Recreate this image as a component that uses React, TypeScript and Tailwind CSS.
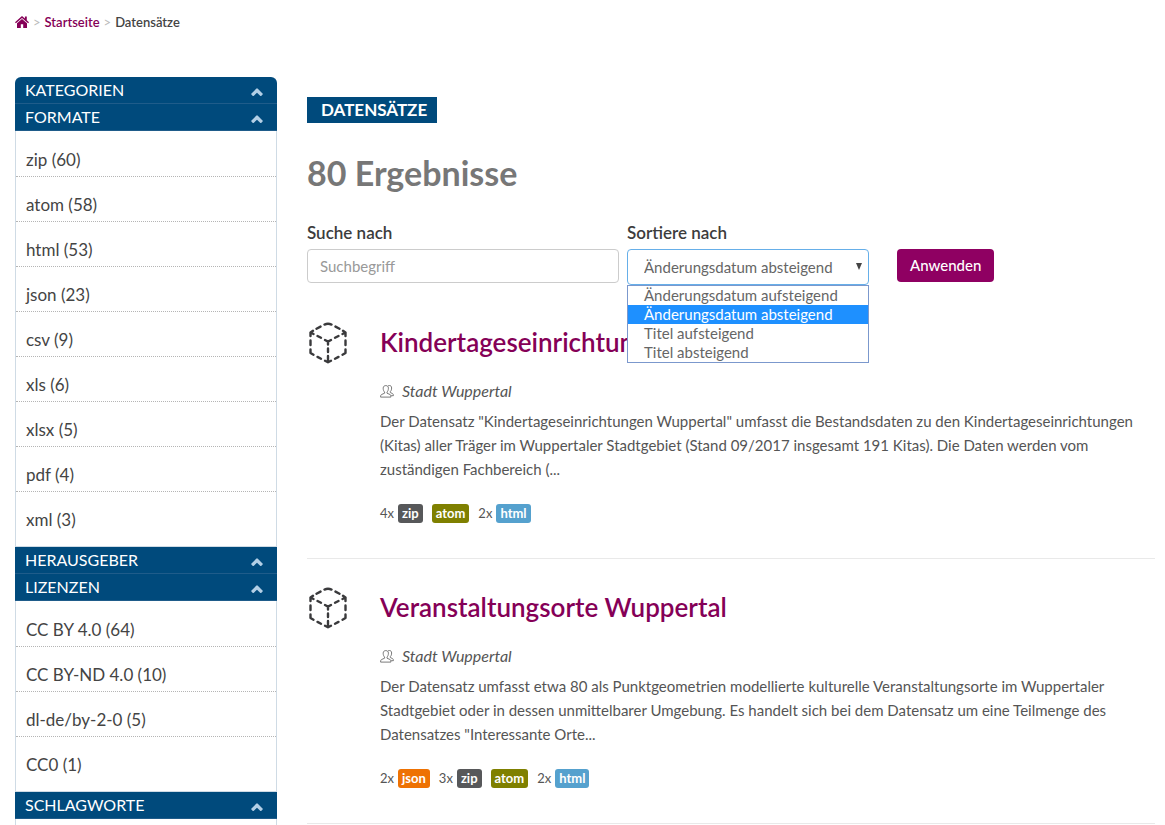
import { useState } from "react";

interface Facet {
    title: string;
    items: string[];
}

interface Format {
    name: "zip" | "atom" | "html" | "json";
    count: number;
}

interface Dataset {
    title: string;
    author: string;
    description: string;
    formats: Format[];
}

const facets: Facet[] = [
    { title: "Kategorien", items: [] },
    {
        title: "Formate",
        items: [
            "zip (60)",
            "atom (58)",
            "html (53)",
            "json (23)",
            "csv (9)",
            "xls (6)",
            "xlsx (5)",
            "pdf (4)",
            "xml (3)",
        ],
    },
    { title: "Herausgeber", items: [] },
    {
        title: "Lizenzen",
        items: ["CC BY 4.0 (64)", "CC BY-ND 4.0 (10)", "dl-de/by-2-0 (5)", "CC0 (1)"],
    },
    { title: "Schlagworte", items: [] },
];

const datasets: Dataset[] = [
    {
        title: "Kindertageseinrichtungen Wuppertal",
        author: "Stadt Wuppertal",
        description:
            'Der Datensatz "Kindertageseinrichtungen Wuppertal" umfasst die Bestandsdaten zu den Kindertageseinrichtungen (Kitas) aller Träger im Wuppertaler Stadtgebiet (Stand 09/2017 insgesamt 191 Kitas). Die Daten werden vom zuständigen Fachbereich (...',
        formats: [
            { name: "zip", count: 4 },
            { name: "atom", count: 1 },
            { name: "html", count: 2 },
        ],
    },
    {
        title: "Veranstaltungsorte Wuppertal",
        author: "Stadt Wuppertal",
        description:
            'Der Datensatz umfasst etwa 80 als Punktgeometrien modellierte kulturelle Veranstaltungsorte im Wuppertaler Stadtgebiet oder in dessen unmittelbarer Umgebung. Es handelt sich bei dem Datensatz um eine Teilmenge des Datensatzes "Interessante Orte...',
        formats: [
            { name: "json", count: 2 },
            { name: "zip", count: 3 },
            { name: "atom", count: 1 },
            { name: "html", count: 2 },
        ],
    },
];

const sortOptions = [
    "Änderungsdatum aufsteigend",
    "Änderungsdatum absteigend",
    "Titel aufsteigend",
    "Titel absteigend",
];

const formatColors = {
    zip: "bg-[#57585a]",
    atom: "bg-[#7f8000]",
    html: "bg-[#55a1ce]",
    json: "bg-[#ee7203]",
};

function HomeIcon() {
    return (
        <svg viewBox="0 0 14 12" className="h-3 w-3.5" fill="currentColor" aria-hidden="true">
            <path d="M7 0 0 6.2l.9 1L7 1.9l6.1 5.3.9-1-2.2-2V.6H9.9v1.9z" />
            <path d="M7 2.9 2 7.2V12h3.8V8.2h2.4V12H12V7.2z" />
        </svg>
    );
}

function ChevronUp() {
    return (
        <svg viewBox="0 0 12 8" className="mt-1 h-2 w-3" aria-hidden="true">
            <path d="M0 6.1 5.2.7Q6 0 6.8.7L12 6.1 10.2 8H9.4L6 4.7 2.6 8H1.8z" fill="#b3cfe6" />
        </svg>
    );
}

function CubeIcon() {
    return (
        <svg
            viewBox="0 0 38 42"
            className="h-[42px] w-[38px]"
            fill="none"
            stroke="#3a3a3c"
            strokeWidth="2.4"
            strokeLinecap="round"
            strokeLinejoin="round"
            aria-hidden="true"
        >
            <path d="M15.5 2.6 Q19 .9 22.5 2.6M11.5 4.6 7.5 6.7M26.5 4.6 30.5 6.7" />
            <path d="M1.5 14V10.5L4 8.8M1.5 10.5 4.5 12M36.5 14V10.5L34 8.8M36.5 10.5 33.5 12" />
            <path d="M8.5 14 12 15.8M29.5 14 26 15.8M16 18 19 19.6 22 18M19 19.6V22.5" />
            <path d="M1.5 18.5V23M1.5 27.5V31L4.5 32.7M36.5 18.5V23M36.5 27.5V31L33.5 32.7" />
            <path d="M19 26.5V30M19 34V40.2M16 38.8 19 40.3 22 38.8M8.5 34.9 12 36.7M29.5 34.9 26 36.7" />
        </svg>
    );
}

function UserIcon() {
    return (
        <svg
            viewBox="0 0 14 13"
            className="h-[13px] w-3.5"
            fill="none"
            stroke="#6b6b6b"
            strokeWidth="0.9"
            strokeLinejoin="round"
            aria-hidden="true"
        >
            <path d="M3.2 3.2C3.2 1.5 4.2.6 5.8.6s2.6.9 2.6 2.6c0 1.8-.5 3-1.4 3.8v1.2l3 1.3c.7.3.9.9.9 2.6H.6c0-1.7.3-2.3 1-2.6l3-1.3V7c-.9-.8-1.4-2-1.4-3.8z" />
            <path d="M8 .9C8.4.6 8.9.5 9.4.5c1.4 0 2.2.9 2.2 2.5 0 1.7-.4 2.7-1.2 3.4v1.2l2 .9c.7.3 1 .9 1 2.2h-2.2" />
        </svg>
    );
}

function FacetPanel({ title, items }: Facet) {
    return (
        <section>
            <h2>
                <button
                    type="button"
                    className="flex h-[27px] w-full items-center justify-between border-b border-[#1f5c8a] bg-[#004a7c] pr-3.5 pl-2.5 text-base leading-6 text-white uppercase"
                >
                    {title}
                    <ChevronUp />
                </button>
            </h2>
            {items.length > 0 && (
                <ul className="border-x border-b border-[#cfdbe5] pt-px pb-[9px]">
                    {items.map((item) => (
                        <li
                            key={item}
                            className="border-b border-dotted border-[#b5b5b5] last:border-transparent"
                        >
                            <a
                                href="#"
                                className="block px-2.5 pt-4 pb-1 text-[17px] leading-6 text-[#444]"
                            >
                                {item}
                            </a>
                        </li>
                    ))}
                </ul>
            )}
        </section>
    );
}

function DatasetItem({ title, author, description, formats }: Dataset) {
    return (
        <article className="flex gap-8 border-b border-[#e9e9e9] pt-7 pb-[33px]">
            <div className="w-[41px] shrink-0 pl-0.5">
                <CubeIcon />
            </div>
            <div className="min-w-0 flex-1 pt-[3px] text-[#555]">
                <h3 className="text-[26px] leading-[34px] font-semibold text-[#850057]">
                    <a href="#">{title}</a>
                </h3>
                <p className="mt-5 flex items-center gap-2 text-base leading-6 italic">
                    <UserIcon />
                    {author}
                </p>
                <p className="mt-1.5 text-[15px] leading-6">{description}</p>
                <ul className="mt-5 flex flex-wrap items-center gap-x-[9px] text-[13px] leading-6">
                    {formats.map(({ name, count }) => (
                        <li key={name} className="flex items-center gap-1">
                            {count > 1 && <span>{count}x</span>}
                            <span
                                className={`rounded-[3px] px-1 text-[13px] leading-[19px] font-bold text-white ${formatColors[name]}`}
                            >
                                {name}
                            </span>
                        </li>
                    ))}
                </ul>
            </div>
        </article>
    );
}

function SearchForm() {
    const [query, setQuery] = useState("");
    const [sort, setSort] = useState(sortOptions[1]);

    return (
        <form
            className="mt-7 flex items-start gap-2 text-[15px]"
            onSubmit={(e) => e.preventDefault()}
        >
            <div className="w-[312px]">
                <label
                    htmlFor="query"
                    className="block text-[17px] leading-6 font-semibold text-[#3c3c3c]"
                >
                    Suche nach
                </label>
                <input
                    id="query"
                    type="text"
                    value={query}
                    onChange={(e) => setQuery(e.target.value)}
                    placeholder="Suchbegriff"
                    className="mt-1 block h-[34px] w-full rounded border border-[#ccc] px-3 text-[#555] placeholder:text-[#999]"
                />
            </div>
            <div className="relative w-[242px]">
                <label
                    htmlFor="sort"
                    className="block text-[17px] leading-6 font-semibold text-[#3c3c3c]"
                >
                    Sortiere nach
                </label>
                <div className="relative mt-1">
                    <select
                        id="sort"
                        value={sort}
                        onChange={(e) => setSort(e.target.value)}
                        className="block h-9 w-full appearance-none rounded border border-[#66afe9] bg-white px-4 text-[#666]"
                    >
                        {sortOptions.map((option) => (
                            <option key={option}>{option}</option>
                        ))}
                    </select>
                    <svg
                        viewBox="0 0 6 7"
                        className="pointer-events-none absolute top-3.5 right-[7px] h-[7px] w-1.5"
                        aria-hidden="true"
                    >
                        <path d="M0 0h6L3 7z" fill="#444" />
                    </svg>
                </div>
                <ul
                    role="listbox"
                    aria-label="Sortiere nach"
                    className="absolute top-full left-0 z-10 w-full border border-[#7b98cd] bg-white leading-[19px] text-[#666]"
                >
                    {sortOptions.map((option) => (
                        <li
                            key={option}
                            role="option"
                            aria-selected={option === sort}
                            onClick={() => setSort(option)}
                            className="cursor-default px-4 aria-selected:bg-[#1e90ff] aria-selected:text-white"
                        >
                            {option}
                        </li>
                    ))}
                </ul>
            </div>
            <button
                type="submit"
                className="mt-7 ml-5 h-[33px] rounded bg-[#8f0062] px-[13px] font-medium text-white"
            >
                Anwenden
            </button>
        </form>
    );
}

export default function App() {
    return (
        <div className="bg-white pr-2.5 pl-[15px] font-['Lato',sans-serif] text-[#444]">
            <nav
                aria-label="Brotkrumen"
                className="flex items-center gap-1 pt-3 text-[13px] leading-5 font-semibold"
            >
                <a href="#" aria-label="Home" className="text-[#850057]">
                    <HomeIcon />
                </a>
                <span className="font-normal text-[#bbb]">&gt;</span>
                <a href="#" className="text-[#850057]">
                    Startseite
                </a>
                <span className="font-normal text-[#bbb]">&gt;</span>
                <span>Datensätze</span>
            </nav>

            <div className="mt-[45px] flex gap-[30px]">
                <aside className="w-[262px] shrink-0">
                    <div className="overflow-hidden rounded-t-md">
                        {facets.map((facet) => (
                            <FacetPanel key={facet.title} {...facet} />
                        ))}
                    </div>
                    <div className="h-1.5 border-x border-[#cfdbe5]" />
                </aside>

                <main className="min-w-0 flex-1 pt-5">
                    <h2 className="w-fit bg-[#004a7c] pr-2.5 pl-3.5 text-[17px] leading-[26px] font-bold text-white uppercase">
                        Datensätze
                    </h2>
                    <h1 className="mt-[30px] text-[34px] leading-10 font-bold text-[#777]">
                        80 Ergebnisse
                    </h1>
                    <SearchForm />
                    <div className="mt-[9px]">
                        {datasets.map((dataset) => (
                            <DatasetItem key={dataset.title} {...dataset} />
                        ))}
                    </div>
                </main>
            </div>
        </div>
    );
}
